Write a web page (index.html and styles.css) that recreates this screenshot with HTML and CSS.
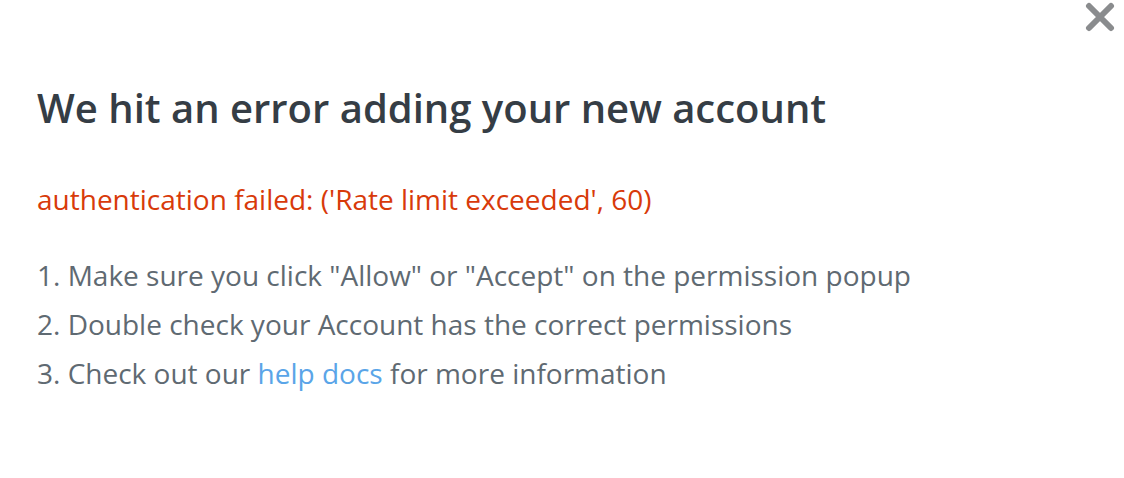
FILE: index.html
```html
<!DOCTYPE html>
<html>
<head>
<meta charset="utf-8">
<link rel="stylesheet" href="styles.css">
</head>
<body>
<div class="modal">
  <button class="close" aria-label="Close">
    <svg width="30" height="30" viewBox="0 0 30 30"><path d="M4 4 L26 26 M26 4 L4 26" stroke="#8a8c8e" stroke-width="6" stroke-linecap="round"/></svg>
  </button>
  <h1 class="title">We hit an error adding your new account</h1>
  <p class="error">authentication failed: ('Rate limit exceeded', 60)</p>
  <ol class="steps">
    <li>1. Make sure you click "Allow" or "Accept" on the permission popup</li>
    <li>2. Double check your Account has the correct permissions</li>
    <li>3. Check out our <a class="link" href="#">help docs</a> for more information</li>
  </ol>
</div>
</body>
</html>
```
FILE: styles.css
```css
html, body {
  margin: 0;
  padding: 0;
  background: #fff;
}
body {
  font-family: "Open Sans", "Noto Sans", sans-serif;
  width: 1124px;
  height: 478px;
  overflow: hidden;
}
.modal {
  position: relative;
  padding: 84px 37px 0 37px;
}
.close {
  position: absolute;
  top: 2px;
  right: 9px;
  border: 0;
  background: none;
  padding: 0;
  width: 30px;
  height: 30px;
  cursor: pointer;
}
.close svg { display: block; }
.title {
  margin: 0;
  font-size: 40px;
  font-weight: 600;
  color: #353d45;
  line-height: 48px;
  letter-spacing: 0;
}
.error {
  margin: 51px 0 0 0;
  font-size: 28px;
  line-height: 32px;
  color: #d83a0a;
}
.steps {
  list-style: none;
  margin: 36px 0 0 0;
  padding: 0;
  font-size: 28px;
  line-height: 49px;
  color: #5f6a72;
}
.link {
  color: #5aa5e8;
  text-decoration: none;
}
```
